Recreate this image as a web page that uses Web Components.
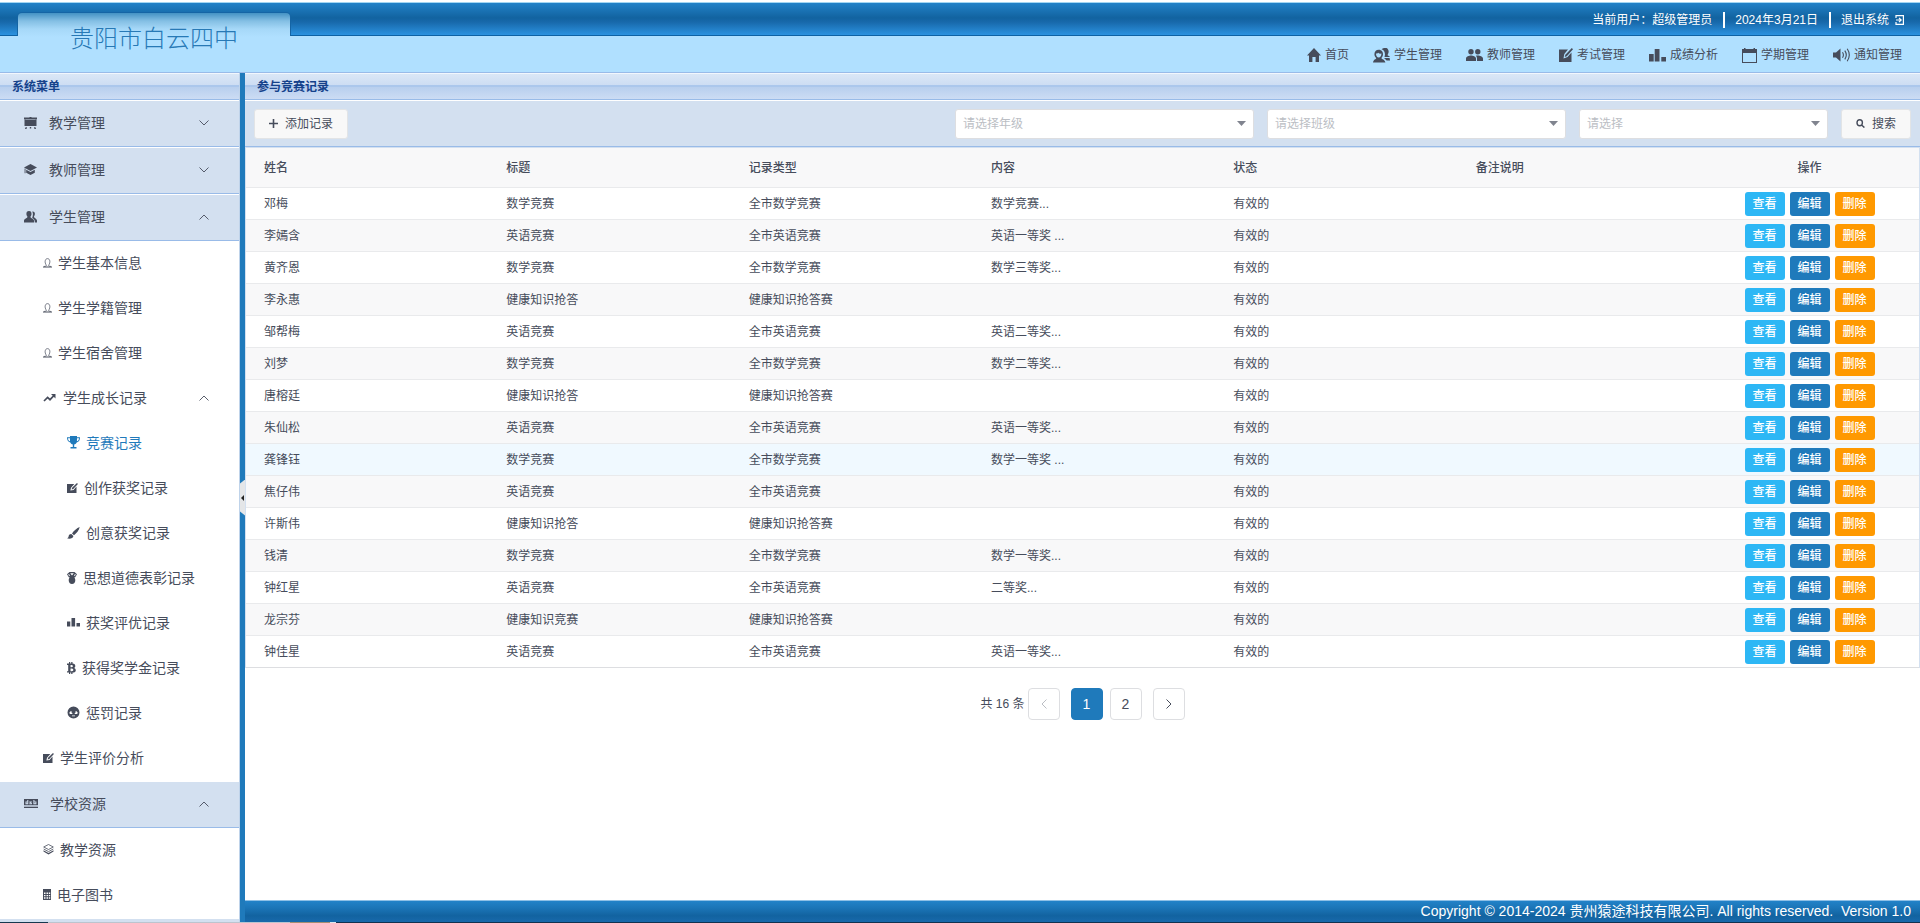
<!DOCTYPE html>
<html lang="zh-CN">
<head>
<meta charset="utf-8">
<title>贵阳市白云四中</title>
<style>
html, body { margin: 0; height: 100%; }
body {
  font: 12px/18px "Liberation Sans", "Noto Sans CJK SC", sans-serif;
  color: #464c5b;
  overflow: hidden;
}
</style>
</head>
<body>
<app-shell>
  <app-header slot="header" school="贵阳市白云四中">
    <span slot="session">当前用户：超级管理员</span>
    <span slot="session">2024年3月21日</span>
    <logout-link slot="session">退出系统</logout-link>
    <nav-link slot="nav" icon="home">首页</nav-link>
    <nav-link slot="nav" icon="students">学生管理</nav-link>
    <nav-link slot="nav" icon="people">教师管理</nav-link>
    <nav-link slot="nav" icon="exam">考试管理</nav-link>
    <nav-link slot="nav" icon="chart">成绩分析</nav-link>
    <nav-link slot="nav" icon="calendar">学期管理</nav-link>
    <nav-link slot="nav" icon="sound">通知管理</nav-link>
  </app-header>

  <side-panel slot="side" heading="系统菜单">
    <menu-group icon="easel" label="教学管理"></menu-group>
    <menu-group icon="cap" label="教师管理"></menu-group>
    <menu-group icon="contacts" label="学生管理" open>
      <menu-item icon="person">学生基本信息</menu-item>
      <menu-item icon="person">学生学籍管理</menu-item>
      <menu-item icon="person">学生宿舍管理</menu-item>
      <menu-item icon="trend" expanded>学生成长记录</menu-item>
      <menu-item icon="trophy" level="3" active>竞赛记录</menu-item>
      <menu-item icon="compose" level="3">创作获奖记录</menu-item>
      <menu-item icon="brush" level="3">创意获奖记录</menu-item>
      <menu-item icon="medal" level="3">思想道德表彰记录</menu-item>
      <menu-item icon="bars" level="3">获奖评优记录</menu-item>
      <menu-item icon="bitcoin" level="3">获得奖学金记录</menu-item>
      <menu-item icon="face" level="3">惩罚记录</menu-item>
      <menu-item icon="compose">学生评价分析</menu-item>
    </menu-group>
    <menu-group icon="board" label="学校资源" open>
      <menu-item icon="layers">教学资源</menu-item>
      <menu-item icon="calculator">电子图书</menu-item>
    </menu-group>
    <menu-group icon="cap" label=""></menu-group>
  </side-panel>

  <split-bar slot="split"></split-bar>

  <content-panel slot="main" heading="参与竞赛记录">
    <filter-bar slot="tools"></filter-bar>
    <record-table></record-table>
    <page-nav total="16"></page-nav>
  </content-panel>
  <app-footer slot="footer">Copyright © 2014-2024 贵州猿途科技有限公司. All rights reserved. &nbsp;Version 1.0</app-footer>
</app-shell>

<script>
class Base extends HTMLElement {
  render(html) {
    const t = document.createElement('template');
    t.innerHTML = '<style>:host,*{box-sizing:border-box}</style>' + html;
    (this.shadowRoot || this.attachShadow({ mode: 'open' })).replaceChildren(t.content.cloneNode(true));
  }
}

/* name: [width, height, shapes] */
const ICONS = {
  home: [14, 14, '<path d="M7 0 0 7.6h2V14h3.4V9h3.2v5H12V7.6h2z"/>'],
  students: [17, 15, '<path d="M11 0a3.6 3.6 0 0 1 4.4 2.2c.6 1.500 0 3.600-.9 4.700.2.700 1.700.8 2.500 2.100H11.500C12.500 6 12 2.500 8.600 1.300 9.300.600 10 .1 11 0z"/><path fill-rule="evenodd" d="M5.700 1.800C8.600 1.800 10.200 4 10 6.500c-.1 1.600-.8 2.700-1.600 3.500.3 1.500 3.400 1.300 4 4.600H0c.4-3.300 3-3.100 3.300-4.600C2 9 1.400 7.800 1.400 6.300c0-2.500 1.600-4.500 4.300-4.500zM3 5.600c-.1 2.200 1 4 2.700 4s2.900-1.800 2.700-4c-1.500.3-2.500-.2-3.200-.900C4.700 5.300 4 5.600 3 5.600z"/><path d="M11 10h5.600l.4 2.600h-3.400z"/>'],
  people: [17, 12, '<circle cx="5" cy="2.800" r="2.700"/><circle cx="11.800" cy="2.800" r="2.700"/><path d="M0 12V9.500C0 7.600 3 6.600 5 6.600s5 1 5 2.900V12zM11 12V9.500c0-1.100-.5-2-1.200-2.700.700-.1 1.400-.2 2-.2 2 0 5.200 1 5.200 2.900V12z"/>'],
  exam: [14, 14, '<path fill-rule="evenodd" d="M0 1.500h9L5.300 6l-.8 4.400 4-1.300L12.500 4.400V14H0z"/><path d="m12.800 0 1.200 1.200-6.200 7L5.700 9l.7-2.200z"/>'],
  chart: [17, 13, '<path d="M0 5h4.700v7.500H0zM5.700 0h4.800v12.500H5.700zM12.300 8H17v4.500h-4.700z"/>'],
  calendar: [15, 15, '<path fill-rule="evenodd" d="M0 1h2V0h1.500v1h8V0H13v1h2v14H0zm1 4v9h13V5z"/>'],
  sound: [17, 14, '<path d="M0 4.500h3L7.500.5v13l-4.500-4H0z"/><path fill="none" stroke="currentColor" stroke-width="1.100" d="M9.500 4.200q1.800 2.800 0 5.600M11.800 2.600q3 4.400 0 8.800M14.200.8q4.200 6.200 0 12.400"/>'],
  logout: [9, 10, '<path fill="none" stroke="currentColor" stroke-width="1.200" d="M1 3V.7h7.400v8.600H1V7M1 5h4.800M4 2.800 6.200 5 4 7.200"/>'],
  easel: [13, 12, '<path fill-rule="evenodd" d="M0 0.500h5.500V0h2v.5H13V2h-.5v7h-12V2H0zm1.300 1.500v.5h10.400V2zM1.500 10.300h1.600L2.500 12H1zM5.800 10h1.400v1.500H5.800zM9.900 10.300h1.600L12 12h-1.500z"/>'],
  cap: [13, 11, '<path d="M6.500 0 13 3.500 6.500 7 0 3.500z"/><path d="M2.200 5.700 6.500 8l4.300-2.300v3L6.500 11 2.200 8.700zM.6 4.500h.9v4.800H.6z"/>'],
  contacts: [13, 12, '<path d="M5 0c1.800 0 2.600 1.300 2.500 3 0 1.200-.5 2-1 2.500-.2 2 3 1.800 3.500 4V11.500H0v-2c.4-2.200 3.600-2 3.400-4-.5-.5-1-1.300-1-2.500C2.300 1.300 3.200 0 5 0z"/><path d="M8.300.5c1.600-.3 2.700.8 2.600 2.500 0 1-.4 1.700-.9 2.200-.1 2.100 2.700 2 3 4.300v2h-2.200c.1-3-1-3.600-2.600-4.500.6-2 1.200-4.300.1-6.500z"/>'],
  person: [9, 10, '<path fill="none" stroke="currentColor" stroke-width=".7" d="M3.400 7.300C1.200 4.400 2 .6 4.500.6s3.300 3.800 1.100 6.700c0 .8.900.9 2.400 1.200M3.400 7.300c0 .8-.9.900-2.400 1.200"/><path d="M0 8.500h9v1H0z"/>'],
  trend: [14, 10, '<path fill="none" stroke="currentColor" stroke-width="1.700" d="m1 8 3.600-3.600L7 6.700l4-4.200"/><path d="M8 1h4.500v4.500z"/>'],
  trophy: [13, 13, '<path fill-rule="evenodd" d="M3 0h7v1.300h3c0 3-1 4.600-3.300 5.100C9.200 7.600 8 8.200 7.200 8.500V11H9.500v1.500h-6V11h2.300V8.500C5 8.200 3.800 7.600 3.300 6.400 1 5.900 0 4.300 0 1.300h3zM1 2.200c.1 1.700.8 2.800 2 3.100C3 4.300 3 3 3 2.200zm11 0h-2c0 1 0 2.100-.1 3.100 1.200-.3 2-1.400 2.100-3.100z"/>'],
  compose: [11, 10, '<path fill-rule="evenodd" d="M0 1h7.300L4 4.700l-.6 2.900L6.500 7 9.500 3.600V10H0z"/><path d="m10 0 .9.900-4.600 5-1.700.5.500-1.600z"/>'],
  brush: [13, 12, '<path d="M12.700 0C10 1 6.500 4 5 6.400l2 1.900C9.500 6.300 12 3.300 12.700 0zM4.300 7c-2 .1-2.500 1.300-2.700 2.500C1.300 10.500.8 11 0 11.300c2.500.9 6.200.2 6.400-2.400z"/>'],
  medal: [10, 12, '<path fill-rule="evenodd" d="M2.500 0h5L10 2.300 8.200 5.200l-1 .3C8 6.200 8.300 7 8.300 8.300 8.300 10.500 7 12 5 12S1.700 10.500 1.700 8.300c0-1.300.3-2.100 1.100-2.800l-1-.3L0 2.300zM3.200 1.200 5 3.500l1.800-2.300zM2 2l-.8.6.9 1.400.9-.4zM8 2l-1 1.600.9.400.9-1.400z"/>'],
  bars: [13, 9, '<path d="M0 3.500h3.300V8.500H0zM4.500 0h3.600v8.500H4.500zM9.500 5H13v3.500H9.500z"/>'],
  bitcoin: [9, 12, '<path fill-rule="evenodd" d="M0 1.500h2V0h1.200v1.500h1V0h1.300v1.500C7.500 1.700 8.300 2.700 8.300 4c0 1-.5 1.600-1.300 2 1 .3 1.800 1.100 1.800 2.200 0 1.400-1 2.300-3.300 2.400V12H4.200v-1.400h-1V12H2v-1.400H0V9.200h1.200V2.900H0zm3.500 1.400v2.300c1.500 0 2.400-.1 2.400-1.200S5 2.900 3.500 2.900zm0 3.700v2.600c1.700 0 2.800-.1 2.800-1.300s-1.100-1.300-2.800-1.300z"/>'],
  face: [13, 13, '<path fill-rule="evenodd" d="M6.500.5a6 6 0 1 1 0 12 6 6 0 0 1 0-12zM3.500 5.300 2.200 7l.9.900 1 .1 1-.1.500-.9-1-.2V5.300zm5 0v1.500l-1 .2.500.9 1 .1 1-.1.900-.9-1.300-1.700zM5 9.500v.8h3v-.8z"/>'],
  board: [14, 10, '<path fill-rule="evenodd" d="M0 0h14v6.300H0zm3.300 1v1.500H1.500v2.700h2.800V1zm2 1.400v1.200l1.800.7H5.300v.9h2.600V3.900L6.600 3.300h1.300v-.9zM9.400 1v4.200h3V2.500h-2V1zM2.500 3.300h.8v1h-.8zm7.900 0h1v1h-1z"/><path d="M0 7.700h14V9H0z"/>'],
  layers: [11, 11, '<path fill="none" stroke="currentColor" stroke-width=".8" d="M5.500.5 10.300 3 5.500 5.500.7 3zM.7 5l4.800 2.600L10.300 5"/><path d="M.5 6.300 5.500 9l5-2.700v1.200l-5 3-5-3z"/>'],
  calculator: [8, 11, '<path fill-rule="evenodd" d="M0 0h8v11H0zm1 3.500V5h1.500V3.500zm2.500 0V5H5V3.500zm2.300 0V5h1.400V3.500zM1 6v1.300h1.500V6zm2.500 0v1.300H5V6zm2.300 0v1.300h1.400V6zM1 8.300v1.400h1.500V8.300zm2.500 0v1.400H5V8.300zm2.300 0v1.400h1.400V8.300z"/>'],
  plus: [9, 9, '<path d="M3.700 0h1.600v3.700H9v1.600H5.300V9H3.700V5.300H0V3.700h3.700z"/>'],
  search: [9, 9, '<path fill="none" stroke="currentColor" stroke-width="1.400" d="M6.400 3.700c0 2-1 3-2.700 3S1 5.700 1 3.700s1-3 2.700-3 2.700 1 2.700 3zM5.600 5.900 8.400 8.600"/>'],
  down: [10, 6, '<path fill="none" stroke="currentColor" stroke-width=".9" d="m.5.500 4.500 4.500L9.500.500"/>'],
  up: [10, 6, '<path fill="none" stroke="currentColor" stroke-width=".9" d="m.5 5.500L5 1l4.500 4.500"/>'],
  left: [6, 10, '<path fill="none" stroke="currentColor" d="M5.500.5 1 5l4.500 4.500"/>'],
  right: [6, 10, '<path fill="none" stroke="currentColor" d="M.5.500 5 5 .5 9.500"/>'],
  caret: [9, 5, '<path d="M0 0h9L4.500 5z"/>'],
  collapse: [3, 6, '<path d="M3 0v6L0 3z"/>']
};

customElements.define('app-icon', class extends Base {
  connectedCallback() {
    const [w, h, body] = ICONS[this.getAttribute('name')];
    this.render(`<style>:host{display:inline-flex;flex:none}svg{display:block;fill:currentColor}</style>
      <svg width="${w}" height="${h}" viewBox="0 0 ${w} ${h}" aria-hidden="true">${body}</svg>`);
  }
});

customElements.define('app-shell', class extends Base {
  connectedCallback() {
    this.render(`<style>
      :host{display:grid;height:100vh;grid-template-columns:240px 5px minmax(0,1fr);grid-template-rows:auto minmax(0,1fr) auto 1px;background:#fff}
      ::slotted([slot=header]){grid-column:1/-1}
      ::slotted([slot=side]){grid-column:1;grid-row:2/4}
      ::slotted([slot=split]){grid-column:2;grid-row:2/4}
      ::slotted([slot=footer]){grid-column:3}
      .edge{grid-column:1/-1;grid-row:4;background:linear-gradient(90deg,#16384f 48px,#bcc4ce 48px 290px,#a58d72 290px 330px,#dfe6ec 330px 336px,#12314f 336px)}
    </style>
    <slot name="header"></slot><slot name="side"></slot><slot name="split"></slot><slot name="main"></slot><slot name="footer"></slot><div class="edge"></div>`);
  }
});

customElements.define('app-header', class extends Base {
  connectedCallback() {
    this.render(`<style>
      :host{display:flex;justify-content:space-between;height:73px;border-top:2px solid #fff;border-bottom:1px solid #99bbe8;
        background:linear-gradient(#a3d6f2 0 1px,transparent 1px),linear-gradient(#2282c8,#1b74b6 20%,#1263a0 45%,#1869ab 58%,#2b91de 96%,#0e62a4 97%) 0 1px/100% 33px no-repeat,#b0e0ff}
      .tab{width:274px;margin:10px 0 0 17px;padding:1px 1px 0;border-radius:5px 5px 0 0;background:linear-gradient(#1565a5 24px,#b0e0ff 24px)}
      h1{margin:0;height:100%;padding:8px 0 0 52px;border-radius:4px 4px 0 0;font-size:24px;line-height:36px;font-weight:300;color:#2779b6;
        background:linear-gradient(#4492c4,#84bfe4 8px,#a6d8f8 16px,#b0e0ff 24px)}
      .right{display:flex;flex-direction:column}
      .session{display:flex;justify-content:flex-end;align-items:center;height:34px;padding:1px 16px 0 0;color:#fff}
      nav{display:flex;justify-content:flex-end;align-items:center;gap:24px;height:36px;padding:2px 18px 0 0}
      ::slotted(span){padding:0 11px 0 10px;border-right:2px solid #fff;line-height:16px}
      ::slotted(logout-link){padding-left:10px}
    </style>
    <div class="tab"><h1>${this.getAttribute('school')}</h1></div>
    <div class="right"><div class="session"><slot name="session"></slot></div><nav><slot name="nav"></slot></nav></div>`);
  }
});

customElements.define('nav-link', class extends Base {
  connectedCallback() {
    this.render(`<style>:host{display:block}a{display:flex;align-items:center;gap:4px;color:#464c5b;text-decoration:none;line-height:18px}</style>
      <a href="#"><app-icon name="${this.getAttribute('icon')}"></app-icon><slot></slot></a>`);
  }
});

customElements.define('logout-link', class extends Base {
  connectedCallback() {
    this.render(`<style>:host{display:block}a{display:flex;align-items:center;gap:6px;color:#fff;text-decoration:none}</style>
      <a href="#"><slot></slot><app-icon name="logout"></app-icon></a>`);
  }
});

customElements.define('panel-title', class extends Base {
  connectedCallback() {
    this.render(`<style>
      :host{display:block}
      h2{margin:0;height:27px;padding:0 12px;font-size:12px;line-height:26px;font-weight:700;color:#15428b;border-top:1px solid #f2f7fd;border-bottom:1px solid #99bbe8;
        background:linear-gradient(#dae7f6,#cdddf3 11px,#abc7ec 11px 13px,#b8cfee 13px,#ccdcf4)}
    </style><h2><slot></slot></h2>`);
  }
});

customElements.define('side-panel', class extends Base {
  connectedCallback() {
    this.render(`<style>:host{display:flex;flex-direction:column;min-height:0;overflow:hidden;border-right:1px solid #bfd3ea}nav{min-height:0;overflow:hidden}</style>
      <panel-title>${this.getAttribute('heading')}</panel-title><nav><slot></slot></nav>`);
  }
});

customElements.define('menu-group', class extends Base {
  connectedCallback() {
    const open = this.hasAttribute('open');
    this.render(`<style>
      :host{display:block}
      button{display:flex;align-items:center;gap:12px;width:100%;height:47px;padding:0 30px 2px 24px;border:0;border-top:1px solid #fff;border-bottom:1px solid #99bbe8;
        background:#d3e0f0;color:#464c5b;font:14px/20px "Liberation Sans","Noto Sans CJK SC",sans-serif;text-align:left}
      span{flex:1}
    </style>
    <button type="button" aria-expanded="${open}"><app-icon name="${this.getAttribute('icon')}"></app-icon><span>${this.getAttribute('label')}</span><app-icon name="${open ? 'up' : 'down'}"></app-icon></button>
    <slot></slot>`);
  }
});

customElements.define('menu-item', class extends Base {
  connectedCallback() {
    this.render(`<style>
      :host{display:block}
      a{display:flex;align-items:center;gap:6px;height:45px;padding:0 30px 2px 43px;color:#464c5b;text-decoration:none;font-size:14px;line-height:20px}
      :host([level="3"]) a{padding-left:67px}
      :host([active]) a{color:#1f7abb}
      span{flex:1;white-space:nowrap}
    </style>
    <a href="#"><app-icon name="${this.getAttribute('icon')}"></app-icon><span><slot></slot></span>${this.hasAttribute('expanded') ? '<app-icon name="up"></app-icon>' : ''}</a>`);
  }
});

customElements.define('split-bar', class extends Base {
  connectedCallback() {
    this.render(`<style>
      :host{display:flex;align-items:center;background:#1f7abb}
      button{display:flex;align-items:center;justify-content:center;width:5px;height:36px;padding:0;border:0;background:#e4e6e8;color:#222;clip-path:polygon(0 4px,100% 0,100% 100%,0 32px)}
    </style><button type="button" aria-label="收起菜单"><app-icon name="collapse"></app-icon></button>`);
  }
});

customElements.define('content-panel', class extends Base {
  connectedCallback() {
    this.render(`<style>:host{display:flex;flex-direction:column;min-height:0;overflow:hidden}</style>
      <panel-title>${this.getAttribute('heading')}</panel-title><slot name="tools"></slot><slot></slot>`);
  }
});

customElements.define('tool-button', class extends Base {
  connectedCallback() {
    this.render(`<style>
      :host{display:block}
      button{display:flex;align-items:center;gap:7px;height:30px;padding:0 14px;border:1px solid #e2e4e6;border-radius:3px;background:#f8f8f8;color:#464c5b;font:inherit;white-space:nowrap}
    </style><button type="button"><app-icon name="${this.getAttribute('icon')}"></app-icon><slot></slot></button>`);
  }
});

customElements.define('select-box', class extends Base {
  connectedCallback() {
    const text = this.getAttribute('placeholder');
    this.render(`<style>
      :host{display:grid;align-items:center;width:299px}
      :host([narrow]){width:249px}
      select,app-icon{grid-area:1/1}
      select{appearance:none;width:100%;height:30px;padding:0 24px 0 7px;border:1px solid #dddee1;border-radius:3px;background:#fff;color:#bbbec4;font:inherit}
      app-icon{justify-self:end;margin-right:8px;color:#80848f;pointer-events:none}
    </style><select aria-label="${text}"><option>${text}</option></select><app-icon name="caret"></app-icon>`);
  }
});

customElements.define('filter-bar', class extends Base {
  connectedCallback() {
    this.render(`<style>
      :host{display:block}
      form{display:flex;align-items:center;gap:13px;height:47px;padding:0 9px;border-top:1px solid #fff;border-bottom:1px solid #99bbe8;background:#d3e0f0}
      tool-button:first-child{margin-right:auto}
    </style>
    <form><tool-button icon="plus">添加记录</tool-button>
      <select-box placeholder="请选择年级"></select-box><select-box placeholder="请选择班级"></select-box><select-box narrow placeholder="请选择"></select-box>
      <tool-button icon="search">搜索</tool-button></form>`);
  }
});

customElements.define('action-button', class extends Base {
  connectedCallback() {
    this.render(`<style>
      :host{display:block}
      button{display:block;width:40px;height:24px;padding:0;border:0;border-radius:3px;background:#1f7abb;color:#fff;font:inherit;font-weight:500}
      :host([kind=view]) button{background:#2db7f5}
      :host([kind=remove]) button{background:#ff9900}
    </style><button type="button"><slot></slot></button>`);
  }
});

const M = ['数学竞赛', '全市数学竞赛'], E = ['英语竞赛', '全市英语竞赛'], H = ['健康知识抢答', '健康知识抢答赛'];
const ROWS = [
  ['邓梅', ...M, '数学竞赛...'],
  ['李嫣含', ...E, '英语一等奖 ...'],
  ['黄齐恩', ...M, '数学三等奖...'],
  ['李永惠', ...H, ''],
  ['邹帮梅', ...E, '英语二等奖...'],
  ['刘梦', ...M, '数学二等奖...'],
  ['唐榕廷', ...H, ''],
  ['朱仙松', ...E, '英语一等奖...'],
  ['龚锋钰', ...M, '数学一等奖 ...'],
  ['焦仔伟', ...E, ''],
  ['许斯伟', ...H, ''],
  ['钱清', ...M, '数学一等奖...'],
  ['钟红星', ...E, '二等奖...'],
  ['龙宗芬', '健康知识竞赛', '健康知识抢答赛', ''],
  ['钟佳星', ...E, '英语一等奖...']
];

customElements.define('record-table', class extends Base {
  connectedCallback() {
    const head = ['姓名', '标题', '记录类型', '内容', '状态', '备注说明'];
    this.render(`<style>
      :host{display:block}
      table{width:100%;table-layout:fixed;border-collapse:separate;border-spacing:0;border:1px solid #d3e0f0;border-bottom:0}
      .ops{width:219px}
      th,td{height:32px;padding:0 18px;border-bottom:1px solid #e9eaec;text-align:left;font-weight:400;white-space:nowrap}
      th{height:40px;font-weight:500;background:#f8f8f9}
      tr:nth-child(even) td{background:#f8f8f9}
      tr.current td{background:#f0f9ff}
      tr:last-child td{border-bottom-color:#dddee1}
      th:last-child{text-align:center}
      td div{display:flex;justify-content:center;gap:5px}
    </style>
    <table><colgroup><col span="6"><col class="ops"></colgroup>
      <thead><tr>${head.map(h => `<th scope="col">${h}</th>`).join('')}<th scope="col">操作</th></tr></thead>
      <tbody>${ROWS.map((r, i) => `<tr${i === 8 ? ' class="current"' : ''}>${[...r, '有效的', ''].map(c => `<td>${c}</td>`).join('')}<td><div><action-button kind="view">查看</action-button><action-button>编辑</action-button><action-button kind="remove">删除</action-button></div></td></tr>`).join('')}</tbody>
    </table>`);
  }
});

customElements.define('page-nav', class extends Base {
  connectedCallback() {
    this.render(`<style>
      :host{display:block}
      nav{display:flex;justify-content:center;align-items:center;gap:7px;padding-top:20px}
      span{margin-right:-4px}
      button{display:flex;align-items:center;justify-content:center;width:32px;height:32px;padding:0;border:1px solid #dddee1;border-radius:4px;background:#fff;color:#464c5b;font:inherit;font-size:14px}
      .on{border-color:#1f7abb;background:#1f7abb;color:#fff}
      button:disabled{color:#bbbec4}
      .end{margin:0 4px}
      .end:last-child{margin-right:0}
      .end:disabled{margin-left:0}
    </style>
    <nav aria-label="分页"><span>共 ${this.getAttribute('total')} 条</span>
      <button type="button" class="end" disabled aria-label="上一页"><app-icon name="left"></app-icon></button>
      <button type="button" class="on" aria-current="page">1</button><button type="button">2</button>
      <button type="button" class="end" aria-label="下一页"><app-icon name="right"></app-icon></button></nav>`);
  }
});

customElements.define('app-footer', class extends Base {
  connectedCallback() {
    this.render(`<style>
      :host{display:block}
      footer{height:22px;padding-right:9px;border-top:1px solid #8fc0e6;text-align:right;white-space:nowrap;font-size:14px;line-height:20px;color:#fff;
        background:linear-gradient(#2282c8,#1b74b6 35%,#1263a0 70%,#1869ab)}
    </style><footer><slot></slot></footer>`);
  }
});
</script>
</body>
</html>
